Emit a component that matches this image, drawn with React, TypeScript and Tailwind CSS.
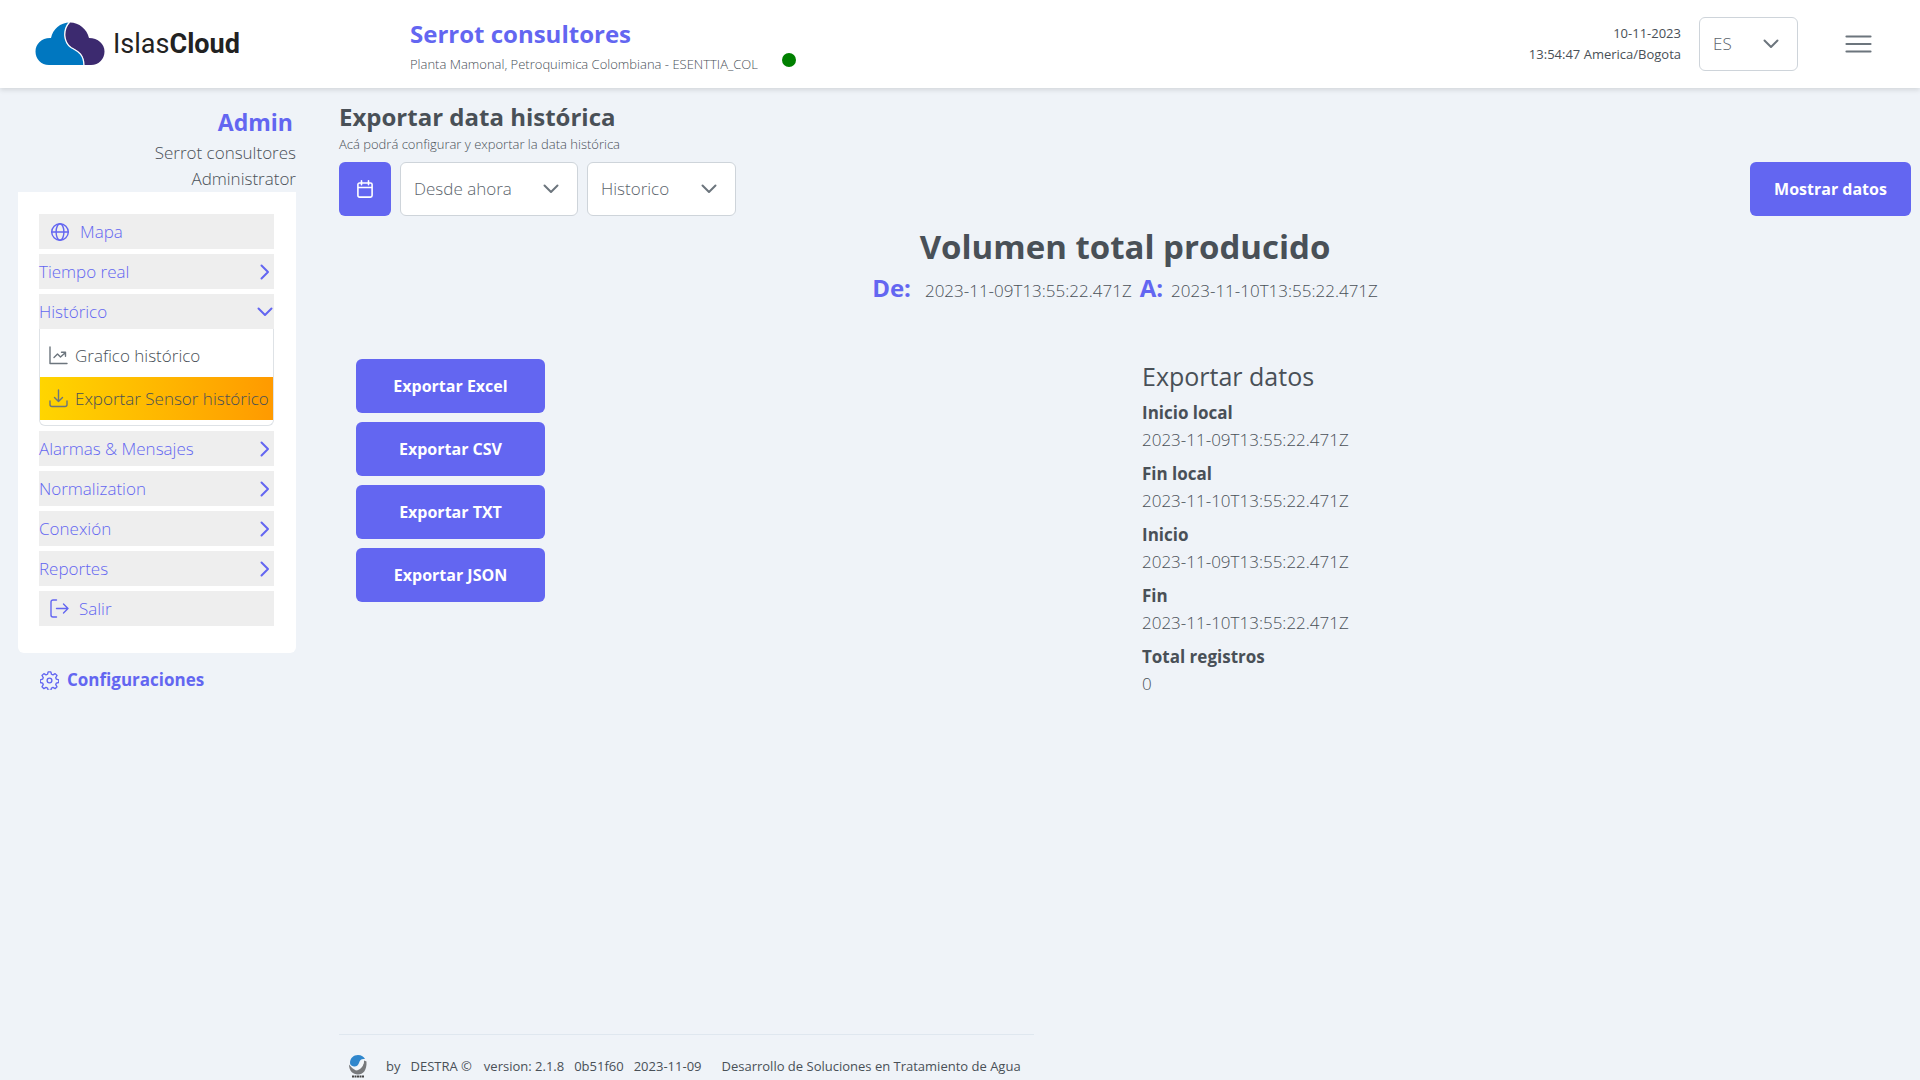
import type { ReactNode } from "react";

function Icon({ children, className = "size-[18px]", box = "0 0 18 18", width = 1.4 }: { children: ReactNode; className?: string; box?: string; width?: number }) {
  return (
    <svg viewBox={box} className={`shrink-0 ${className}`} fill="none" stroke="currentColor" strokeWidth={width} strokeLinecap="round" strokeLinejoin="round" aria-hidden="true">
      {children}
    </svg>
  );
}

function ChevronDown() {
  return (
    <Icon className="h-2.5 w-4" box="0 0 16 10" width={2}>
      <path d="M1.5 1.5 8 8l6.5-6.5" />
    </Icon>
  );
}

function ChevronRight() {
  return (
    <Icon className="h-4 w-2.5" box="0 0 10 16" width={2}>
      <path d="M1.5 1.5 8 8l-6.5 6.5" />
    </Icon>
  );
}

function Dropdown({ label, options, className }: { label: string; options: string[]; className: string }) {
  return (
    <div className={`relative h-[54px] text-[#6c757d] ${className}`}>
      <select aria-label={label} className="size-full appearance-none rounded-md border border-[#ced4da] bg-white pl-[13px] pr-10 text-[17px] font-light text-[#5b646c]">
        {options.map((o) => (
          <option key={o}>{o}</option>
        ))}
      </select>
      <span className="pointer-events-none absolute inset-y-0 right-[19px] flex items-center">
        <ChevronDown />
      </span>
    </div>
  );
}

function Header() {
  return (
    <header className="relative flex h-[88px] shrink-0 items-center bg-white shadow-[0_2px_5px_rgba(0,0,0,0.12)]">
      <a href="#" aria-label="IslasCloud" className="flex w-[410px] items-center gap-2 pl-[35px] text-[#222]">
        <svg viewBox="0 0 70 44" className="h-11 w-[70px]" aria-hidden="true">
          <path d="M35 .5C25 .5 18 7 16 16 7 15.500 .5 22 .5 29.500.5 37 6 43 14 43h35c0-8-3-13-10-16-9-4-14-16-4-26.500Z" fill="#0077c0" />
          <path d="M35 .5C44 .5 52 7 54 16c9 0 15.500 6 15.500 13.500S64 43 56 43h-7c0-8-3-13-10-16-9-4-14-16-4-26.500Z" fill="#3c2a6f" />
          <path d="M34.500 0c-7 8-6 20 1.500 25.500 6 3.500 13 6 13 18.500" fill="none" stroke="#fff" strokeWidth="1.300" />
        </svg>
        <span className="font-[Roboto,sans-serif] text-[27px] leading-8">
          Islas<b className="font-bold">Cloud</b>
        </span>
      </a>
      <div className="flex flex-col pt-1">
        <h2 className="text-[24px] font-bold leading-[34px] text-[#6366f1]">Serrot consultores</h2>
        <div className="flex items-center gap-6 pt-0.5">
          <p className="text-[13px] font-light leading-5">Planta Mamonal, Petroquimica Colombiana - ESENTTIA_COL</p>
          <span className="mb-2 size-3.5 rounded-full bg-[#008000]" />
        </div>
      </div>
      <div className="ml-auto flex items-center">
        <p className="mr-[18px] text-right text-[13px] leading-[21px]">
          10-11-2023
          <br />
          13:54:47 America/Bogota
        </p>
        <Dropdown label="Idioma" options={["ES", "EN"]} className="w-[99px]" />
        <button aria-label="Menú" className="ml-[47px] mr-12 text-[#6c757d]">
          <Icon className="h-5 w-[27px]" box="0 0 27 20" width={2.200}>
            <path d="M1.500 2.500h24M1.500 10h24M1.500 17.500h24" />
          </Icon>
        </button>
      </div>
    </header>
  );
}

const itemClass = "flex h-[35px] w-full items-center bg-[#eee] text-[17px] font-light text-[#6366f1]";

function Group({ label, open = false }: { label: string; open?: boolean }) {
  return (
    <button aria-expanded={open} className={itemClass}>
      <span className="grow text-left">{label}</span>
      <span className="flex w-[19px] justify-center">{open ? <ChevronDown /> : <ChevronRight />}</span>
    </button>
  );
}

function Sidebar() {
  return (
    <aside className="w-[296px] shrink-0 pl-[18px]">
      <div className="pt-4 text-right">
        <h2 className="pr-[3px] text-[23px] font-bold leading-9 text-[#6366f1]">Admin</h2>
        <p className="text-[17px] font-light leading-[26px]">
          Serrot consultores
          <br />
          Administrator
        </p>
      </div>
      <nav className="rounded-b-md bg-white pb-[27px] pl-[21px] pr-[22px] pt-[22px]">
        <ul className="flex flex-col gap-[5px]">
          <li>
            <a href="#" className={`${itemClass} gap-[11px] pl-3`}>
              <Icon>
                <circle cx="9" cy="9" r="8.300" />
                <ellipse cx="9" cy="9" rx="3.900" ry="8.300" />
                <path d="M.7 9h16.600" />
              </Icon>
              Mapa
            </a>
          </li>
          <li><Group label="Tiempo real" /></li>
          <li>
            <Group label="Histórico" open />
            <ul className="rounded-b-md border border-t-0 border-[#dee2e6] pb-[5px] pt-[5px] text-[17px] font-light">
              <li>
                <a href="#" className="flex h-[43px] items-center gap-[7px] whitespace-nowrap pl-[9px]">
                  <Icon className="size-[19px] text-[#6c757d]" box="0 0 19 19">
                    <path d="M1 1v16.500h17M5 11.500l3.500-3.500 3 3L16.500 6.500M12.500 6.200h4v4" />
                  </Icon>
                  Grafico histórico
                </a>
              </li>
              <li>
                <a href="#" aria-current="page" className="flex h-[43px] items-center gap-[7px] whitespace-nowrap bg-linear-to-r from-[#ffd500] to-[#ff9a00] pl-[9px]">
                  <Icon className="size-[19px] text-[#6c757d]" box="0 0 19 19">
                    <path d="M9.500 1v11.500M5.500 8.500l4 4 4-4M1 12v3.500a2 2 0 0 0 2 2h13a2 2 0 0 0 2-2V12" />
                  </Icon>
                  Exportar Sensor histórico
                </a>
              </li>
            </ul>
          </li>
          <li><Group label="Alarmas & Mensajes" /></li>
          <li><Group label="Normalization" /></li>
          <li><Group label="Conexión" /></li>
          <li><Group label="Reportes" /></li>
          <li>
            <a href="#" className={`${itemClass} gap-2.5 pl-[11px]`}>
              <Icon className="size-[19px]" box="0 0 19 19">
                <path d="M6.500 1H3a2 2 0 0 0-2 2v13a2 2 0 0 0 2 2h3.500M6.500 9.500H18M13.500 5l4.500 4.500-4.500 4.500" />
              </Icon>
              Salir
            </a>
          </li>
        </ul>
      </nav>
      <a href="#" className="mt-[14px] flex items-center gap-2 pl-[22px] text-[17px] font-bold leading-[26px] text-[#6366f1]">
        <Icon className="size-[19px]" box="0 0 24 24" width={1.700}>
          <circle cx="12" cy="12" r="3" />
          <path d="M10.300 1.500h3.400l.8 3 1.900.8 2.700-1.600 2.400 2.400-1.600 2.700.8 1.900 3 .8v3.400l-3 .8-.8 1.900 1.600 2.700-2.400 2.400-2.700-1.600-1.900.8-.8 3h-3.400l-.8-3-1.900-.8-2.700 1.600-2.400-2.400 1.600-2.700-.8-1.900-3-.8v-3.400l3-.8.8-1.900-1.600-2.700 2.400-2.400 2.700 1.600 1.900-.8Z" transform="translate(0 -.4)" />
        </Icon>
        Configuraciones
      </a>
    </aside>
  );
}

const primary = "h-[54px] rounded-md bg-[#6366f1] text-[16px] font-bold text-white";

const FORMATS = ["Excel", "CSV", "TXT", "JSON"];

const DETAILS = [
  ["Inicio local", "2023-11-09T13:55:22.471Z"],
  ["Fin local", "2023-11-10T13:55:22.471Z"],
  ["Inicio", "2023-11-09T13:55:22.471Z"],
  ["Fin", "2023-11-10T13:55:22.471Z"],
  ["Total registros", "0"],
];

function Footer() {
  return (
    <footer className="mt-auto flex h-[46px] w-[695px] items-center border-t border-[#dfe7ef] pl-[9px] pt-4 text-[13px] leading-5">
      <svg viewBox="0 0 20 24" className="mr-[18px] h-6 w-5" aria-hidden="true">
        <path d="M1 10.500C1 17 5 20.500 10 20.500s9-4 8.500-13l-2.500-1c-.5 6-3.500 9.500-8 10C5 15 3 13 1 10.500Z" fill="#77797c" />
        <path d="M2 9C2 4 5.500 1 10 1c3.500 0 6 1.700 7 4-4-.5-5 1-6 4-1 2.800-3 3.800-5 3.500C3.500 12 2 11 2 9Z" fill="#2f86cc" />
        <path d="M6 13.500c4.500.5 6-1.500 7-4.500.6-1.800 1.500-2.800 3-3 .3 5-3 9-7 9-1 0-2.200-.5-3-1.500Z" fill="#f4f7fa" />
        <path d="M4 22.500h12" stroke="#444" strokeWidth="1.800" strokeDasharray="2 .5" />
      </svg>
      <span className="mr-[10px]">by</span>
      <span className="mr-3">DESTRA ©</span>
      <span className="mr-[10px]">version: 2.1.8</span>
      <span className="mr-[10px]">0b51f60</span>
      <span className="mr-5">2023-11-09</span>
      <span className="whitespace-nowrap">Desarrollo de Soluciones en Tratamiento de Agua</span>
    </footer>
  );
}

export default function App() {
  return (
    <div className="flex min-h-screen flex-col bg-[#eff3f8] font-['Open_Sans','Noto_Sans',sans-serif] text-[#495057]">
      <Header />
      <div className="flex grow">
        <Sidebar />
        <main className="flex grow flex-col pl-[43px] pr-[9px]">
          <h1 className="pt-3 text-[24px] font-bold leading-[34px]">Exportar data histórica</h1>
          <p className="text-[13px] font-light leading-5">Acá podrá configurar y exportar la data histórica</p>
          <div className="mt-2 flex gap-[9px]">
            <button aria-label="Elegir fechas" className="flex h-[54px] w-[52px] items-center justify-center rounded-md bg-[#6366f1] text-white">
              <Icon className="size-[18px]" width={1.600}>
                <path d="M3.500 3h11A1.600 1.600 0 0 1 16.100 4.600V15.500A1.600 1.600 0 0 1 14.500 17.100h-11A1.600 1.600 0 0 1 1.900 15.500V4.600A1.600 1.600 0 0 1 3.500 3ZM1.900 7.500h14.200M5.500.8v4M12.500.8v4" />
              </Icon>
            </button>
            <Dropdown label="Rango" options={["Desde ahora"]} className="w-[178px]" />
            <Dropdown label="Tipo" options={["Historico"]} className="w-[149px]" />
            <button className={`${primary} ml-auto w-[161px]`}>Mostrar datos</button>
          </div>
          <h2 className="mt-2 text-center text-[33px] font-bold leading-[46px]">Volumen total producido</h2>
          <p className="flex items-baseline justify-center text-[17px] font-light leading-9">
            <b className="mr-[14px] text-[24px] font-bold text-[#6366f1]">De:</b>
            2023-11-09T13:55:22.471Z
            <b className="mx-2 text-[24px] font-bold text-[#6366f1]">A:</b>
            2023-11-10T13:55:22.471Z
          </p>
          <div className="mt-[33px] grid grid-cols-2">
            <div className="flex flex-col items-start gap-[9px] p-[17px]">
              {FORMATS.map((f) => (
                <button key={f} className={`${primary} w-[189px]`}>{`Exportar ${f}`}</button>
              ))}
            </div>
            <section className="p-[17px]">
              <h3 className="mb-1.5 text-[25px] font-medium leading-[34px]">Exportar datos</h3>
              <dl>
                {DETAILS.map(([name, value]) => (
                  <div key={name} className="mb-[7px] text-[17px] leading-[27px]">
                    <dt className="font-bold">{name}</dt>
                    <dd className="font-light">{value}</dd>
                  </div>
                ))}
              </dl>
            </section>
          </div>
          <Footer />
        </main>
      </div>
    </div>
  );
}
